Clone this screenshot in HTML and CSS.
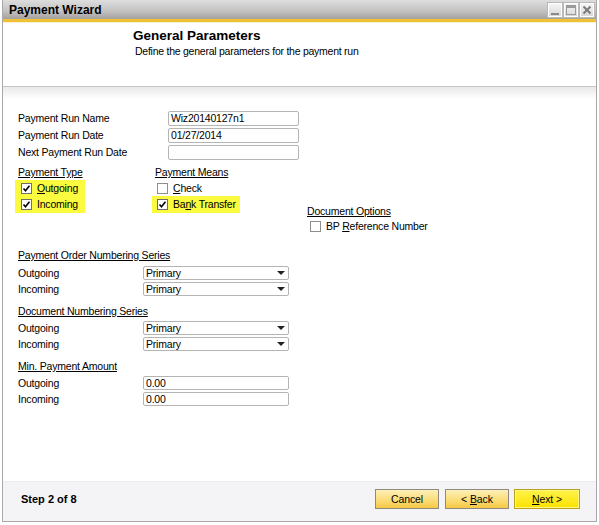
FILE: index.html
```html
<!DOCTYPE html>
<html lang="en">
<head>
    <meta charset="UTF-8">
    <title>Payment Wizard</title>
    <link rel="stylesheet" href="styles.css">
</head>
<body>
    <div class="window">
        <!-- Title bar -->
        <div class="titlebar">
            <span class="title">Payment Wizard</span>
            <div class="win-btns">
                <span class="win-btn"><svg width="12" height="12" viewBox="0 0 12 12"><rect x="2" y="9" width="8" height="2" fill="#8a8a8a"/></svg></span>
                <span class="win-btn"><svg width="12" height="12" viewBox="0 0 12 12"><rect x="1.5" y="1.5" width="9" height="9" fill="none" stroke="#9a9a9a"/><rect x="2" y="2" width="8" height="2" fill="#9a9a9a"/></svg></span>
                <span class="win-btn"><svg width="12" height="12" viewBox="0 0 12 12"><path d="M2.5 2.5 L9.5 9.5 M9.5 2.5 L2.5 9.5" stroke="#7a7a7a" stroke-width="2"/></svg></span>
            </div>
        </div>

        <!-- Step header -->
        <div class="step-head">
            <h1>General Parameters</h1>
            <p>Define the general parameters for the payment run</p>
        </div>

        <div class="content">
            <div class="fields">
                <label>Payment Run Name</label><div class="edit">Wiz20140127n1</div>
                <label>Payment Run Date</label><div class="edit">01/27/2014</div>
                <label>Next Payment Run Date</label><div class="edit"></div>
            </div>

            <div class="options">
                <div class="group">
                    <div class="caption">Payment Type</div>
                    <div class="mark">
                        <div class="check"><span class="box on"><svg width="9" height="9" viewBox="0 0 9 9"><path d="M1.5 4.5 L3.5 6.8 L7.5 1.8" fill="none" stroke="#000" stroke-width="1.6"/></svg></span><span><u>O</u>utgoing</span></div>
                        <div class="check"><span class="box on"><svg width="9" height="9" viewBox="0 0 9 9"><path d="M1.5 4.5 L3.5 6.8 L7.5 1.8" fill="none" stroke="#000" stroke-width="1.6"/></svg></span><span>Incoming</span></div>
                    </div>
                </div>
                <div class="group means">
                    <div class="caption">Payment Means</div>
                    <div class="check"><span class="box"></span><span><u>C</u>heck</span></div>
                    <div class="mark">
                        <div class="check"><span class="box on"><svg width="9" height="9" viewBox="0 0 9 9"><path d="M1.5 4.5 L3.5 6.8 L7.5 1.8" fill="none" stroke="#000" stroke-width="1.6"/></svg></span><span>Ba<u>n</u>k Transfer</span></div>
                    </div>
                </div>
                <div class="group docs">
                    <div class="caption">Document Options</div>
                    <div class="check"><span class="box"></span><span>BP <u>R</u>eference Number</span></div>
                </div>
            </div>

            <div class="section">
                <div class="caption">Payment Order Numbering Series</div>
                <div class="pair"><label>Outgoing</label><div class="combo"><span>Primary</span><i class="arrow"></i></div></div>
                <div class="pair"><label>Incoming</label><div class="combo"><span>Primary</span><i class="arrow"></i></div></div>
            </div>

            <div class="section tight">
                <div class="caption">Document Numbering Series</div>
                <div class="pair"><label>Outgoing</label><div class="combo"><span>Primary</span><i class="arrow"></i></div></div>
                <div class="pair"><label>Incoming</label><div class="combo"><span>Primary</span><i class="arrow"></i></div></div>
            </div>

            <div class="section tight">
                <div class="caption">Min. Payment Amount</div>
                <div class="pair"><label>Outgoing</label><div class="edit">0.00</div></div>
                <div class="pair"><label>Incoming</label><div class="edit">0.00</div></div>
            </div>
        </div>

        <!-- Footer with navigation -->
        <div class="footer">
            <span class="step">Step 2 of 8</span>
            <div class="nav">
                <button class="btn">Cancel</button>
                <button class="btn">&lt; <u>B</u>ack</button>
                <button class="btn primary"><u>N</u>ext &gt;</button>
            </div>
        </div>
    </div>
</body>
</html>
```

FILE: styles.css
```css
/* Base */
* {
    margin: 0;
    padding: 0;
    box-sizing: border-box;
}

body {
    font-family: "Liberation Sans", Arial, sans-serif;
    font-size: 10.5px;
    letter-spacing: -0.2px;
    color: #000;
    background: #fff;
}

/* Window frame */
.window {
    width: 595px;
    height: 522px;
    margin-left: 2px;
    border-left: 1px solid #a9a9a9;
    border-right: 1px solid #a9a9a9;
    border-bottom: 1px solid #a9a9a9;
    display: flex;
    flex-direction: column;
    background: #fff;
}

.titlebar {
    height: 23px;
    display: flex;
    align-items: flex-start;
    justify-content: space-between;
    background: linear-gradient(to bottom, #dedede 0%, #c4c2c1 50%, #a4a19f 86%, #f3c43a 87%, #eebf2d 100%);
    border-bottom: 1px solid #f6f0dc;
}

.title {
    font-size: 12px;
    letter-spacing: 0;
    font-weight: bold;
    line-height: 20px;
    padding-left: 6px;
}

.win-btns {
    display: flex;
    gap: 2px;
    padding: 3px 2px 0 0;
}

.win-btn {
    width: 14px;
    height: 14px;
    display: flex;
    align-items: center;
    justify-content: center;
    background: linear-gradient(to bottom, #f4f4f4, #d8d8d8);
    border: 1px solid #fff;
    outline: 1px solid #b8b8b8;
}

/* Step header */
.step-head {
    height: 64px;
    padding: 5px 0 0 130px;
    border-bottom: 1px solid #c6c6c6;
}

.step-head h1 {
    font-size: 13.5px;
    letter-spacing: 0;
    font-weight: bold;
    line-height: 16px;
}

.step-head p {
    font-size: 10.5px;
    letter-spacing: -0.25px;
    line-height: 13px;
    padding-left: 2px;
    margin-top: 1px;
}

/* Main form */
.content {
    flex: 1;
    padding: 23px 0 0 15px;
    background: linear-gradient(to bottom, #e9e9e9 0px, #fff 12px);
}

.fields {
    display: grid;
    grid-template-columns: 150px 131px;
    grid-auto-rows: 16px;
    row-gap: 1px;
    align-items: center;
}

label {
    line-height: 16px;
}

.edit {
    height: 15px;
    border: 1px solid #b4b4b4;
    border-radius: 2px;
    line-height: 13px;
    padding-left: 2px;
    background: #fff;
}

.caption {
    line-height: 16px;
    text-decoration: underline;
}

/* Checkbox groups */
.options {
    display: flex;
    margin-top: 4px;
    height: 77px;
}

.group {
    width: 137px;
}

.group.means {
    width: 152px;
}

.group.docs {
    padding-top: 39px;
}

.group.docs .check {
    margin-top: -1px;
}

.mark {
    background: #fafa3e;
    margin-left: -3px;
    padding-left: 3px;
    padding-bottom: 1px;
    white-space: nowrap;
}

.group:first-child .mark {
    width: 70px;
}

.group.means .mark {
    width: 88px;
}

.check {
    display: flex;
    align-items: center;
    gap: 5px;
    height: 16px;
    padding-left: 3px;
    white-space: nowrap;
}

.group.means .check {
    padding-left: 2px;
}

.box {
    flex: none;
    width: 11px;
    height: 11px;
    border: 1px solid #8e8e8e;
    background: #fff;
    display: flex;
    align-items: center;
    justify-content: center;
}

.box.on {
    border-color: #6e6e6e;
}

/* Series and amount sections */
.section {
    margin-top: 6px;
}

.section .caption {
    margin-bottom: 2px;
}

.section.tight .caption {
    margin-bottom: 1px;
}

.pair {
    display: grid;
    grid-template-columns: 125px 146px;
    align-items: center;
    height: 16px;
}

.pair .edit {
    height: 14px;
    line-height: 12px;
}

.combo {
    height: 14px;
    border: 1px solid #b4b4b4;
    border-radius: 2px;
    display: flex;
    align-items: center;
    justify-content: space-between;
    padding: 0 3px 0 2px;
}

.arrow {
    width: 0;
    height: 0;
    border-left: 4px solid transparent;
    border-right: 4px solid transparent;
    border-top: 4px solid #222;
}

/* Footer */
.footer {
    height: 40px;
    background: #f4f3f5;
    border-top: 1px solid #ecebed;
    display: flex;
    align-items: center;
    justify-content: space-between;
    padding: 0 16px 6px 18px;
}

.step {
    font-size: 11px;
    letter-spacing: 0;
    font-weight: bold;
}

.nav {
    display: flex;
    gap: 6px;
}

.btn {
    width: 64px;
    height: 20px;
    font-family: "Liberation Sans", Arial, sans-serif;
    font-size: 10.5px;
    letter-spacing: -0.1px;
    color: #000;
    border: 1px solid #8f8a80;
    background: linear-gradient(to bottom, #fdf0b8 0%, #fbdf7e 50%, #f6c946 100%);
}

.btn.primary {
    width: 66px;
    margin-left: -1px;
    border-color: #b7a11e;
    background: linear-gradient(to bottom, #fff34a, #fbe200);
    box-shadow: inset 0 0 0 1px #fff680;
}
```
